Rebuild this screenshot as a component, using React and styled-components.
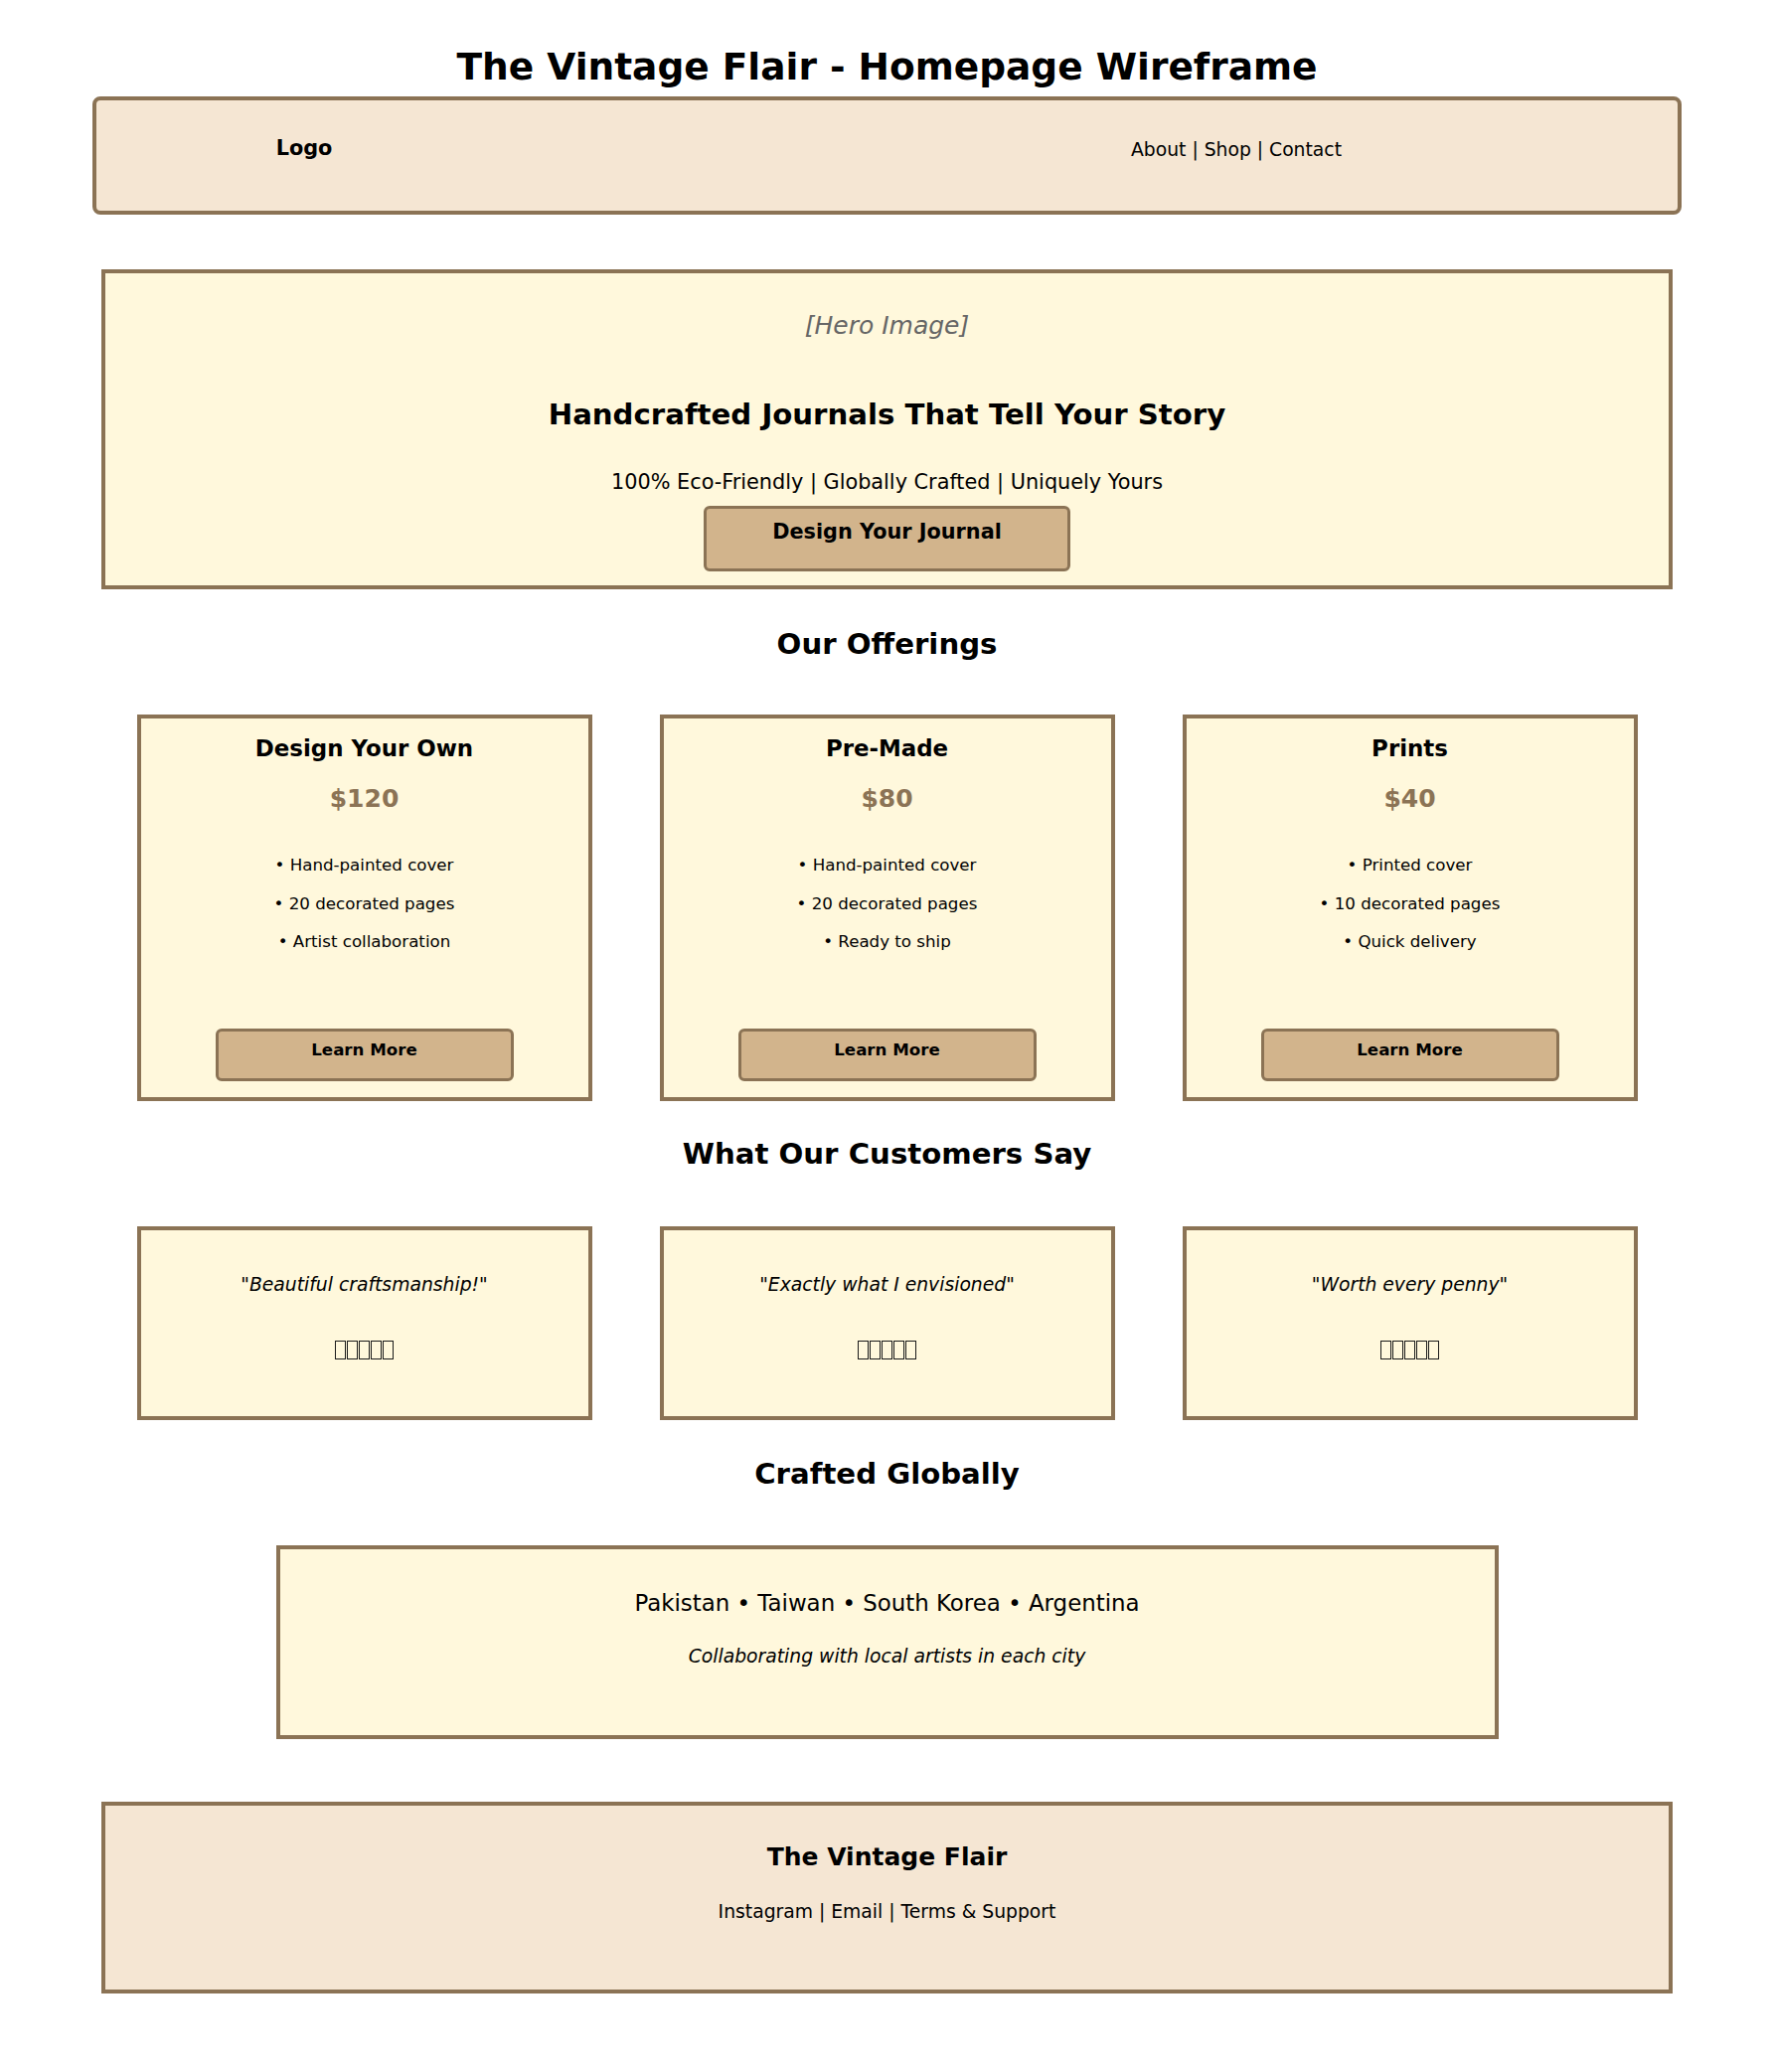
import React from 'react';
import styled, { createGlobalStyle } from 'styled-components';

const GlobalStyle = createGlobalStyle`
  html, body {
    margin: 0;
    padding: 0;
    background: #ffffff;
  }
  body {
    font-family: "DejaVu Sans", "Liberation Sans", sans-serif;
    color: #000;
  }
`;

const offerings = [
  {
    title: 'Design Your Own',
    price: '$120',
    features: ['Hand-painted cover', '20 decorated pages', 'Artist collaboration'],
  },
  {
    title: 'Pre-Made',
    price: '$80',
    features: ['Hand-painted cover', '20 decorated pages', 'Ready to ship'],
  },
  {
    title: 'Prints',
    price: '$40',
    features: ['Printed cover', '10 decorated pages', 'Quick delivery'],
  },
];

const quotes = ['Beautiful craftsmanship!', 'Exactly what I envisioned', 'Worth every penny'];

const App = () => {
  return (
    <>
      <GlobalStyle />
      <Page>
        <PageTitle>The Vintage Flair - Homepage Wireframe</PageTitle>

        <Header>
          <Logo>Logo</Logo>
          <span />
          <Nav>About | Shop | Contact</Nav>
        </Header>

        <Hero>
          <HeroImage>[Hero Image]</HeroImage>
          <HeroHeading>Handcrafted Journals That Tell Your Story</HeroHeading>
          <HeroSub>100% Eco-Friendly | Globally Crafted | Uniquely Yours</HeroSub>
          <HeroButton>Design Your Journal</HeroButton>
        </Hero>

        <SectionTitle $top={38}>Our Offerings</SectionTitle>
        <CardRow $top={54}>
          {offerings.map((item) => (
            <OfferCard key={item.title}>
              <CardTitle>{item.title}</CardTitle>
              <Price>{item.price}</Price>
              <Features>
                {item.features.map((f) => (
                  <li key={f}>• {f}</li>
                ))}
              </Features>
              <LearnMore>Learn More</LearnMore>
            </OfferCard>
          ))}
        </CardRow>

        <SectionTitle $top={36}>What Our Customers Say</SectionTitle>
        <CardRow $top={56}>
          {quotes.map((q) => (
            <QuoteCard key={q}>
              <Quote>"{q}"</Quote>
              <Stars aria-label="5 stars">
                {[0, 1, 2, 3, 4].map((i) => (
                  <Star key={i} />
                ))}
              </Stars>
            </QuoteCard>
          ))}
        </CardRow>

        <SectionTitle $top={37}>Crafted Globally</SectionTitle>
        <GlobalBox>
          <Countries>Pakistan • Taiwan • South Korea • Argentina</Countries>
          <Collab>Collaborating with local artists in each city</Collab>
        </GlobalBox>

        <Footer>
          <FooterTitle>The Vintage Flair</FooterTitle>
          <FooterLinks>Instagram | Email | Terms &amp; Support</FooterLinks>
        </Footer>
      </Page>
    </>
  );
};

const Page = styled.div`
  width: 1785px;
  min-height: 2085px;
  padding-top: 45px;
  box-sizing: border-box;
  display: flex;
  flex-direction: column;
  align-items: center;
`;

const PageTitle = styled.h1`
  margin: 0;
  font-size: 37.5px;
  line-height: 44px;
  font-weight: bold;
`;

const Header = styled.div`
  margin-top: 8px;
  width: 1599px;
  height: 119px;
  box-sizing: border-box;
  border: 4px solid #8b7355;
  border-radius: 8px;
  background: #f5e6d3;
  padding-top: 35px;
  display: grid;
  grid-template-columns: 418px 579px 300px;
  align-items: start;
`;

const Logo = styled.div`
  font-size: 20.8px;
  line-height: 26px;
  font-weight: bold;
  text-align: center;
`;

const Nav = styled.div`
  font-size: 18.75px;
  line-height: 26px;
  text-align: center;
  margin-top: 2px;
`;

const Hero = styled.section`
  margin-top: 55px;
  width: 1581px;
  height: 322px;
  box-sizing: border-box;
  border: 4px solid #8b7355;
  background: #fff8dc;
  padding-top: 38px;
  display: flex;
  flex-direction: column;
  align-items: center;
`;

const HeroImage = styled.div`
  font-size: 25px;
  line-height: 30px;
  font-style: italic;
  color: #666666;
`;

const HeroHeading = styled.h2`
  margin: 57px 0 0;
  font-size: 29.2px;
  line-height: 34px;
  font-weight: bold;
`;

const HeroSub = styled.div`
  margin-top: 38px;
  font-size: 20.8px;
  line-height: 26px;
`;

const HeroButton = styled.div`
  margin-top: 11px;
  width: 369px;
  height: 66px;
  box-sizing: border-box;
  border: 3px solid #8b7355;
  border-radius: 6px;
  background: #d2b48c;
  padding-top: 11px;
  text-align: center;
  font-size: 20.8px;
  line-height: 24px;
  font-weight: bold;
`;

const SectionTitle = styled.h2`
  margin: ${(p) => p.$top}px 0 0;
  font-size: 29.2px;
  line-height: 34px;
  font-weight: bold;
`;

const CardRow = styled.div`
  margin-top: ${(p) => p.$top}px;
  display: grid;
  grid-template-columns: repeat(3, 458px);
  column-gap: 68px;
`;

const Card = styled.div`
  box-sizing: border-box;
  border: 4px solid #8b7355;
  background: #fff8dc;
  display: flex;
  flex-direction: column;
  align-items: center;
`;

const OfferCard = styled(Card)`
  height: 389px;
  padding: 16px 0 16px;
`;

const CardTitle = styled.h3`
  margin: 0;
  font-size: 22.9px;
  line-height: 28px;
  font-weight: bold;
`;

const Price = styled.div`
  margin-top: 22px;
  font-size: 25px;
  line-height: 30px;
  font-weight: bold;
  color: #8b7355;
`;

const Features = styled.ul`
  margin: 33px 0 0;
  padding: 0;
  list-style: none;
  text-align: center;
  font-size: 16.67px;
  line-height: 38.5px;
`;

const LearnMore = styled.div`
  margin-top: auto;
  width: 300px;
  height: 53px;
  box-sizing: border-box;
  border: 3px solid #8b7355;
  border-radius: 6px;
  background: #d2b48c;
  padding-top: 9px;
  text-align: center;
  font-size: 16.67px;
  line-height: 20px;
  font-weight: bold;
`;

const QuoteCard = styled(Card)`
  height: 195px;
  padding-top: 43px;
`;

const Quote = styled.div`
  font-size: 18.75px;
  line-height: 24px;
  font-style: italic;
`;

const Stars = styled.div`
  margin-top: 44px;
  display: flex;
  gap: 1.5px;
`;

const Star = styled.span`
  display: block;
  width: 10.5px;
  height: 19px;
  box-sizing: border-box;
  border: 1.5px solid #1a1a1a;
`;

const GlobalBox = styled(Card)`
  margin-top: 55px;
  width: 1230px;
  height: 195px;
  padding-top: 40px;
`;

const Countries = styled.div`
  font-size: 22.9px;
  line-height: 28px;
`;

const Collab = styled.div`
  margin-top: 28px;
  font-size: 18.75px;
  line-height: 24px;
  font-style: italic;
`;

const Footer = styled.footer`
  margin-top: 63px;
  width: 1581px;
  height: 193px;
  box-sizing: border-box;
  border: 4px solid #8b7355;
  background: #f5e6d3;
  padding-top: 37px;
  display: flex;
  flex-direction: column;
  align-items: center;
`;

const FooterTitle = styled.div`
  font-size: 25px;
  line-height: 30px;
  font-weight: bold;
`;

const FooterLinks = styled.div`
  margin-top: 28px;
  font-size: 18.75px;
  line-height: 24px;
`;

export default App;
